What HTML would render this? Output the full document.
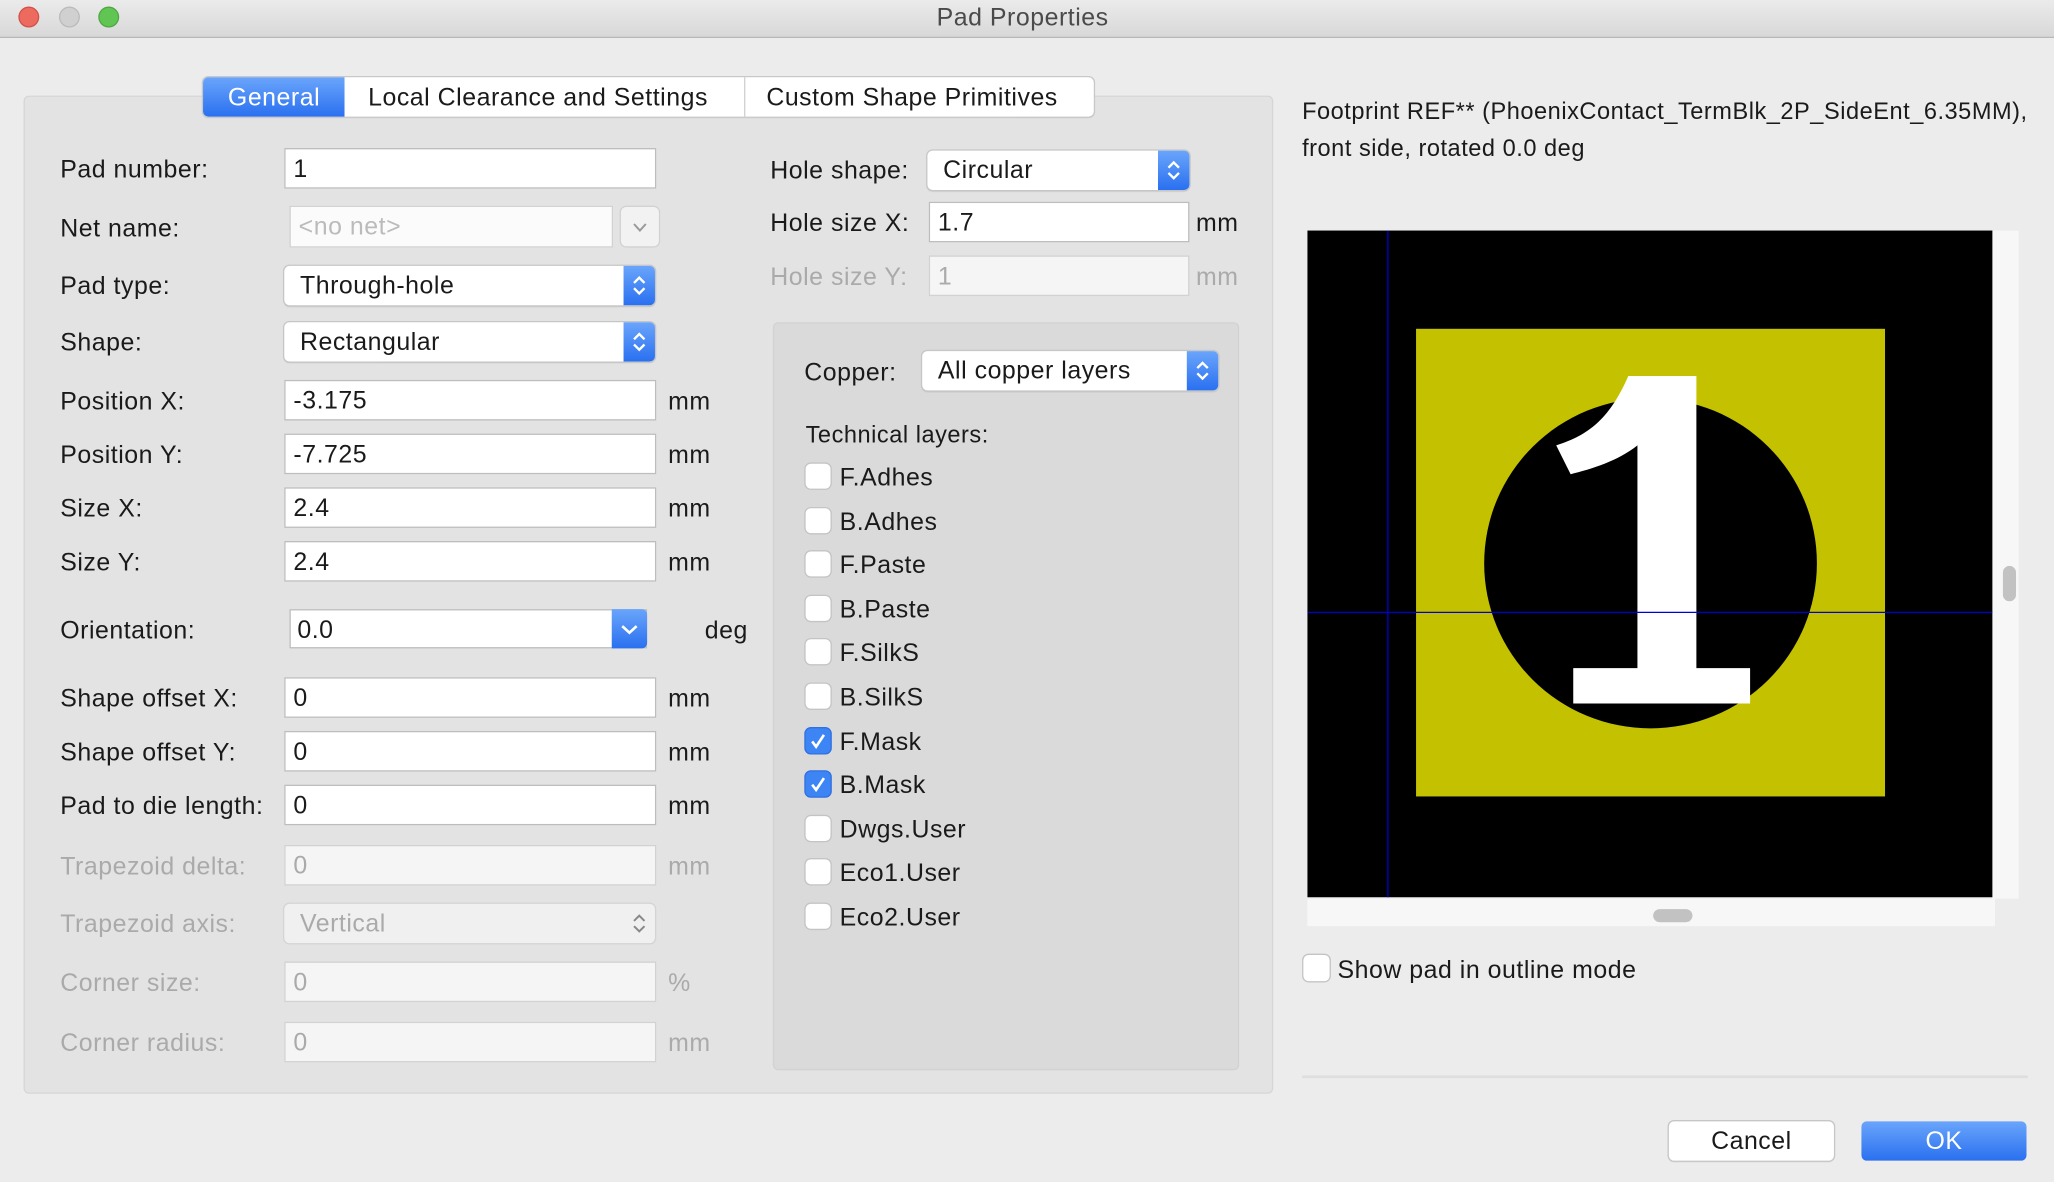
<!DOCTYPE html>
<html><head><meta charset="utf-8"><style>
html,body{margin:0;padding:0;width:2054px;height:1182px;overflow:hidden;background:#ececec}
#w{position:absolute;left:0;top:0;width:1568px;height:902px;transform:scale(1.30995);transform-origin:0 0;font-family:"Liberation Sans",sans-serif;font-size:19px;letter-spacing:0.4px;color:#1a1a1a;background:#ececec}
.a{position:absolute}
.t{position:absolute;line-height:1;transform:translateY(-45%);white-space:nowrap}
.dis{color:#aaa}
.in{position:absolute;background:#fff;border:1px solid #bdbdbd;box-sizing:border-box;height:31px;padding-left:6px;line-height:32px;font-size:19px}
.in.d{background:#f5f5f5;color:#aaa;border-color:#d2d2d2}
.sel{position:absolute;background:#fff;border-radius:4px;box-shadow:0 0 0 1px #c6c6c6,0 1px 1px rgba(0,0,0,.15);height:30px;line-height:32px;padding-left:12px;box-sizing:border-box}
.sel .b{position:absolute;right:0;top:0;width:24px;height:30px;background:linear-gradient(#6aa5fb,#2a70f0);border-radius:0 4px 4px 0}
.sel .b svg{position:absolute;left:5px;top:6px}
.cb{position:absolute;width:19px;height:19px;background:#fff;border-radius:4px;box-shadow:0 0 0 1px #c4c4c4;}
.cb.on{background:#3d85f5;box-shadow:0 0 0 1px #3070e0}
</style></head><body><div id="w">
<div class="a" style="left:0;top:0;width:1568px;height:28px;background:linear-gradient(#ebebeb,#d8d8d8);border-bottom:1px solid #b8b8b8"></div>
<div class="a" style="left:14px;top:5px;width:14px;height:14px;border-radius:50%;background:#ed6a5e;border:.5px solid #d0524a"></div>
<div class="a" style="left:45px;top:5px;width:14px;height:14px;border-radius:50%;background:#d0d0d0;border:.5px solid #bbb"></div>
<div class="a" style="left:75px;top:5px;width:14px;height:14px;border-radius:50%;background:#61c554;border:.5px solid #4ea843"></div>
<div class="t" style="left:715px;top:13px;color:#4a4a4a">Pad Properties</div>

<div class="a" style="left:18px;top:73px;width:954px;height:762px;background:#e3e3e3;border:1px solid #d6d6d6;border-radius:4px;box-sizing:border-box"></div>
<div class="a" style="left:155px;top:59px;width:680px;height:30px;background:#fff;border-radius:4px;box-shadow:0 0 0 1px #c8c8c8,0 1px 1px rgba(0,0,0,.1)"></div>
<div class="a" style="left:155px;top:59px;width:108px;height:30px;background:linear-gradient(#6aa5fb,#2a70f0);border-radius:4px 0 0 4px"></div>
<div class="a" style="left:568px;top:59px;width:1px;height:30px;background:#d0d0d0"></div>
<div class="t" style="left:174px;top:74px;color:#fff">General</div>
<div class="t" style="left:281px;top:74px">Local Clearance and Settings</div>
<div class="t" style="left:585px;top:74px">Custom Shape Primitives</div>

<div class="t" style="left:46px;top:129px">Pad number:</div>
<div class="in" style="left:217px;top:113px;width:284px">1</div>
<div class="t" style="left:46px;top:174px">Net name:</div>
<div class="in d" style="left:221px;top:157px;width:247px;height:32px;color:#bbb;background:#fbfbfb">&lt;no net&gt;</div>
<div class="a" style="left:474px;top:158px;width:29px;height:30px;background:#f2f2f2;border-radius:4px;box-shadow:0 0 0 1px #d2d2d2"><svg width="29" height="30"><path d="M10 13l4.5 5 4.5-5" fill="none" stroke="#999" stroke-width="1.5"/></svg></div>
<div class="t" style="left:46px;top:218px">Pad type:</div>
<div class="sel" style="left:217px;top:203px;width:283px">Through-hole<div class="b"><svg width="14" height="18"><path d="M3 7l4-4 4 4M3 11l4 4 4-4" fill="none" stroke="#fff" stroke-width="1.8"/></svg></div></div>
<div class="t" style="left:46px;top:261px">Shape:</div>
<div class="sel" style="left:217px;top:246px;width:283px">Rectangular<div class="b"><svg width="14" height="18"><path d="M3 7l4-4 4 4M3 11l4 4 4-4" fill="none" stroke="#fff" stroke-width="1.8"/></svg></div></div>

<div class="t" style="left:46px;top:306px">Position X:</div><div class="in" style="left:217px;top:290px;width:284px">-3.175</div><div class="t" style="left:510px;top:306px">mm</div>
<div class="t" style="left:46px;top:347px">Position Y:</div><div class="in" style="left:217px;top:331px;width:284px">-7.725</div><div class="t" style="left:510px;top:347px">mm</div>
<div class="t" style="left:46px;top:388px">Size X:</div><div class="in" style="left:217px;top:372px;width:284px">2.4</div><div class="t" style="left:510px;top:388px">mm</div>
<div class="t" style="left:46px;top:429px">Size Y:</div><div class="in" style="left:217px;top:413px;width:284px">2.4</div><div class="t" style="left:510px;top:429px">mm</div>
<div class="t" style="left:46px;top:481px">Orientation:</div>
<div class="in" style="left:221px;top:465px;width:273px;height:30px;line-height:31px;padding-left:5px">0.0</div>
<div class="a" style="left:467px;top:465px;width:27px;height:30px;background:linear-gradient(#6aa5fb,#2a70f0);border-radius:0 4px 4px 0"><svg width="27" height="30"><path d="M8 13l5.5 5 5.5-5" fill="none" stroke="#fff" stroke-width="2"/></svg></div>
<div class="t" style="left:538px;top:481px">deg</div>
<div class="t" style="left:46px;top:533px">Shape offset X:</div><div class="in" style="left:217px;top:517px;width:284px">0</div><div class="t" style="left:510px;top:533px">mm</div>
<div class="t" style="left:46px;top:574px">Shape offset Y:</div><div class="in" style="left:217px;top:558px;width:284px">0</div><div class="t" style="left:510px;top:574px">mm</div>
<div class="t" style="left:46px;top:615px">Pad to die length:</div><div class="in" style="left:217px;top:599px;width:284px">0</div><div class="t" style="left:510px;top:615px">mm</div>
<div class="t dis" style="left:46px;top:661px">Trapezoid delta:</div><div class="in d" style="left:217px;top:645px;width:284px">0</div><div class="t dis" style="left:510px;top:661px">mm</div>
<div class="t dis" style="left:46px;top:705px">Trapezoid axis:</div>
<div class="sel" style="left:217px;top:690px;width:283px;background:#f0f0f0;color:#aaa;box-shadow:0 0 0 1px #d4d4d4">Vertical<svg style="position:absolute;right:5px;top:6px" width="14" height="18"><path d="M3 7l4-4 4 4M3 11l4 4 4-4" fill="none" stroke="#888" stroke-width="1.5"/></svg></div>
<div class="t dis" style="left:46px;top:750px">Corner size:</div><div class="in d" style="left:217px;top:734px;width:284px">0</div><div class="t dis" style="left:510px;top:750px">%</div>
<div class="t dis" style="left:46px;top:796px">Corner radius:</div><div class="in d" style="left:217px;top:780px;width:284px">0</div><div class="t dis" style="left:510px;top:796px">mm</div>

<div class="t" style="left:588px;top:130px">Hole shape:</div>
<div class="sel" style="left:708px;top:115px;width:200px">Circular<div class="b"><svg width="14" height="18"><path d="M3 7l4-4 4 4M3 11l4 4 4-4" fill="none" stroke="#fff" stroke-width="1.8"/></svg></div></div>
<div class="t" style="left:588px;top:170px">Hole size X:</div><div class="in" style="left:709px;top:154px;width:199px">1.7</div><div class="t" style="left:913px;top:170px">mm</div>
<div class="t dis" style="left:588px;top:211px">Hole size Y:</div><div class="in d" style="left:709px;top:195px;width:199px">1</div><div class="t dis" style="left:913px;top:211px">mm</div>

<div class="a" style="left:590px;top:246px;width:356px;height:571px;background:#dadada;border:1px solid #d2d2d2;border-radius:4px;box-sizing:border-box"></div>
<div class="t" style="left:614px;top:284px">Copper:</div>
<div class="sel" style="left:704px;top:268px;width:226px">All copper layers<div class="b"><svg width="14" height="18"><path d="M3 7l4-4 4 4M3 11l4 4 4-4" fill="none" stroke="#fff" stroke-width="1.8"/></svg></div></div>
<div class="t" style="left:615px;top:331px;font-size:18px">Technical layers:</div>

<div class="cb" style="left:615px;top:354px"></div><div class="t" style="left:641px;top:364px">F.Adhes</div>
<div class="cb" style="left:615px;top:388px"></div><div class="t" style="left:641px;top:398px">B.Adhes</div>
<div class="cb" style="left:615px;top:421px"></div><div class="t" style="left:641px;top:431px">F.Paste</div>
<div class="cb" style="left:615px;top:455px"></div><div class="t" style="left:641px;top:465px">B.Paste</div>
<div class="cb" style="left:615px;top:488px"></div><div class="t" style="left:641px;top:498px">F.SilkS</div>
<div class="cb" style="left:615px;top:522px"></div><div class="t" style="left:641px;top:532px">B.SilkS</div>
<div class="cb on" style="left:615px;top:556px"><svg width="19" height="19"><path d="M5 10l3 4 6-9" fill="none" stroke="#fff" stroke-width="2"/></svg></div><div class="t" style="left:641px;top:566px">F.Mask</div>
<div class="cb on" style="left:615px;top:589px"><svg width="19" height="19"><path d="M5 10l3 4 6-9" fill="none" stroke="#fff" stroke-width="2"/></svg></div><div class="t" style="left:641px;top:599px">B.Mask</div>
<div class="cb" style="left:615px;top:623px"></div><div class="t" style="left:641px;top:633px">Dwgs.User</div>
<div class="cb" style="left:615px;top:656px"></div><div class="t" style="left:641px;top:666px">Eco1.User</div>
<div class="cb" style="left:615px;top:690px"></div><div class="t" style="left:641px;top:700px">Eco2.User</div>

<div class="t" style="left:994px;top:84px;font-size:18px">Footprint REF** (PhoenixContact_TermBlk_2P_SideEnt_6.35MM),</div>
<div class="t" style="left:994px;top:112px;font-size:18px">front side, rotated 0.0 deg</div>

<div class="a" style="left:1521px;top:176px;width:20px;height:510px;background:#f7f7f7"></div>
<div class="a" style="left:1529px;top:432px;width:10px;height:27px;border-radius:5px;background:#c2c2c2"></div>
<div class="a" style="left:998px;top:686px;width:525px;height:21px;background:#f7f7f7"></div>
<div class="a" style="left:1262px;top:694px;width:30px;height:10px;border-radius:5px;background:#c2c2c2"></div>
<svg class="a" style="left:998px;top:176px" width="523" height="509" viewBox="998 176 523 509">
<rect x="998" y="176" width="523" height="509" fill="#000"/>
<rect x="1081" y="251" width="358" height="357" fill="#c4c200"/>
<ellipse cx="1260" cy="430" rx="127" ry="126" fill="#000"/>
<line x1="1059.5" y1="176" x2="1059.5" y2="685" stroke="#0000d0" stroke-width="1"/>
<line x1="998" y1="467.5" x2="1521" y2="467.5" stroke="#0000d0" stroke-width="1"/>
<path d="M1243 287H1295V510H1336V537H1201V510H1250V340C1235 352 1215 358 1199 362L1188 340C1210 333 1228 322 1243 287Z" fill="#fff"/>
<line x1="1250" y1="467.5" x2="1295" y2="467.5" stroke="#0000d0" stroke-width="1"/>
</svg>

<div class="cb" style="left:995px;top:729px;width:20px;height:20px"></div>
<div class="t" style="left:1021px;top:740px">Show pad in outline mode</div>
<div class="a" style="left:994px;top:821px;width:554px;height:2px;background:#dedede"></div>
<div class="a" style="left:1274px;top:856px;width:126px;height:30px;background:#fff;border-radius:4px;box-shadow:0 0 0 1px #c6c6c6,0 1px 1px rgba(0,0,0,.15);text-align:center;line-height:31px">Cancel</div>
<div class="a" style="left:1421px;top:856px;width:126px;height:30px;background:linear-gradient(#6aa5fb,#2a70f0);border-radius:4px;color:#fff;text-align:center;line-height:31px">OK</div>
</div></body></html>
